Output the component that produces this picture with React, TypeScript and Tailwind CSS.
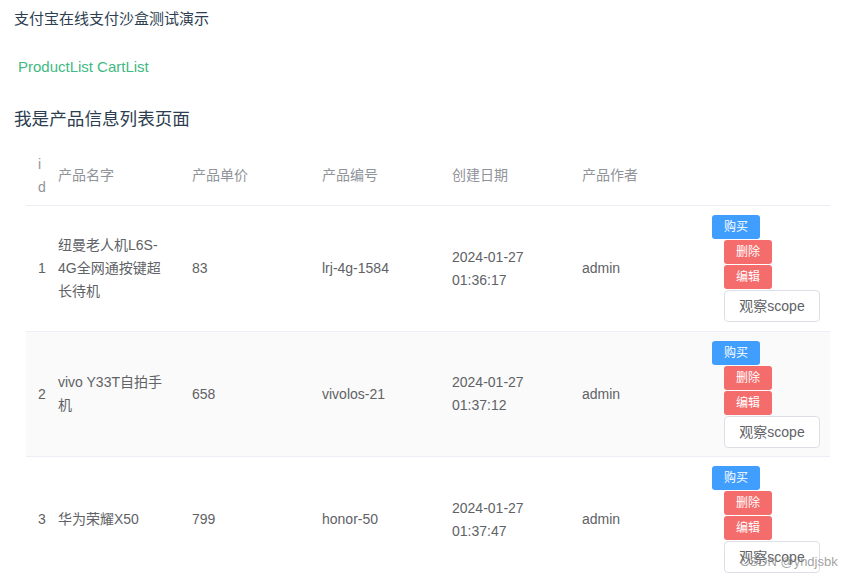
import React from 'react'

type Product = {
  id: number
  name: React.ReactNode
  price: string
  code: string
  date: string
  time: string
  author: string
}

const products: Product[] = [
  { id: 1, name: <>纽曼老人机L6S-<br />4G全网通按键超<br />长待机</>, price: '83', code: 'lrj-4g-1584', date: '2024-01-27', time: '01:36:17', author: 'admin' },
  { id: 2, name: <>vivo Y33T自拍手<br />机</>, price: '658', code: 'vivolos-21', date: '2024-01-27', time: '01:37:12', author: 'admin' },
  { id: 3, name: <>华为荣耀X50</>, price: '799', code: 'honor-50', date: '2024-01-27', time: '01:37:47', author: 'admin' },
]

const font = "font-['Liberation_Sans','Noto_Sans_CJK_SC',sans-serif]"
const cols = 'grid grid-cols-[22px_134px_130px_130px_130px_130px_128px]'

function Actions() {
  return (
    <div className="flex flex-col items-start gap-[1px] pl-[10px]">
      <button className="w-12 h-6 rounded-[3px] bg-[#409eff] text-white text-xs leading-6">购买</button>
      <button className="ml-3 w-12 h-6 rounded-[3px] bg-[#f56c6c] text-white text-xs leading-6">删除</button>
      <button className="ml-3 w-12 h-6 rounded-[3px] bg-[#f56c6c] text-white text-xs leading-6">编辑</button>
      <button className="ml-3 w-24 h-8 rounded border border-[#dcdfe6] bg-white text-sm text-[#606266]">观察scope</button>
    </div>
  )
}

export default function App() {
  return (
    <div className={`relative min-h-[578px] bg-white pl-[14px] pt-[9px] ${font}`}>
      <div className="h-5 leading-5 text-[15px] text-[#2c3e50]">支付宝在线支付沙盒测试演示</div>

      <div className="mt-[28px] h-5 pl-[4px] leading-5 text-[15px] text-[#42b983] flex gap-[4px]">
        <a>ProductList</a>
        <a>CartList</a>
      </div>

      <div className="mt-[30px] h-6 leading-6 text-[17.6px] text-[#2c3e50]">我是产品信息列表页面</div>

      <div className="mt-[15px] ml-[12px] w-[804px] text-sm">
        <div className={`${cols} h-[60px] items-center border-b border-[#ebeef5] text-[#909399] leading-[23px]`}>
          <div className="pl-[12px]">i<br />d</div>
          <div className="pl-[10px]">产品名字</div>
          <div className="pl-[10px]">产品单价</div>
          <div className="pl-[10px]">产品编号</div>
          <div className="pl-[10px]">创建日期</div>
          <div className="pl-[10px]">产品作者</div>
          <div />
        </div>

        {products.map((p, i) => (
          <div
            key={p.id}
            className={`${cols} ${i === 1 ? 'h-[125px] bg-[#fafafa]' : 'h-[126px] bg-white'} items-center border-b border-[#ebeef5] text-[#606266] leading-[23px]`}
          >
            <div className="pl-[12px]">{p.id}</div>
            <div className="pl-[10px] whitespace-nowrap">{p.name}</div>
            <div className="pl-[10px]">{p.price}</div>
            <div className="pl-[10px]">{p.code}</div>
            <div className="pl-[10px]">{p.date}<br />{p.time}</div>
            <div className="pl-[10px]">{p.author}</div>
            <Actions />
          </div>
        ))}
      </div>

      <div className="absolute left-[740px] top-[552px] text-[13px] text-[#8a8a8a]/80 pointer-events-none">CSDN @yhdjsbk</div>
    </div>
  )
}
